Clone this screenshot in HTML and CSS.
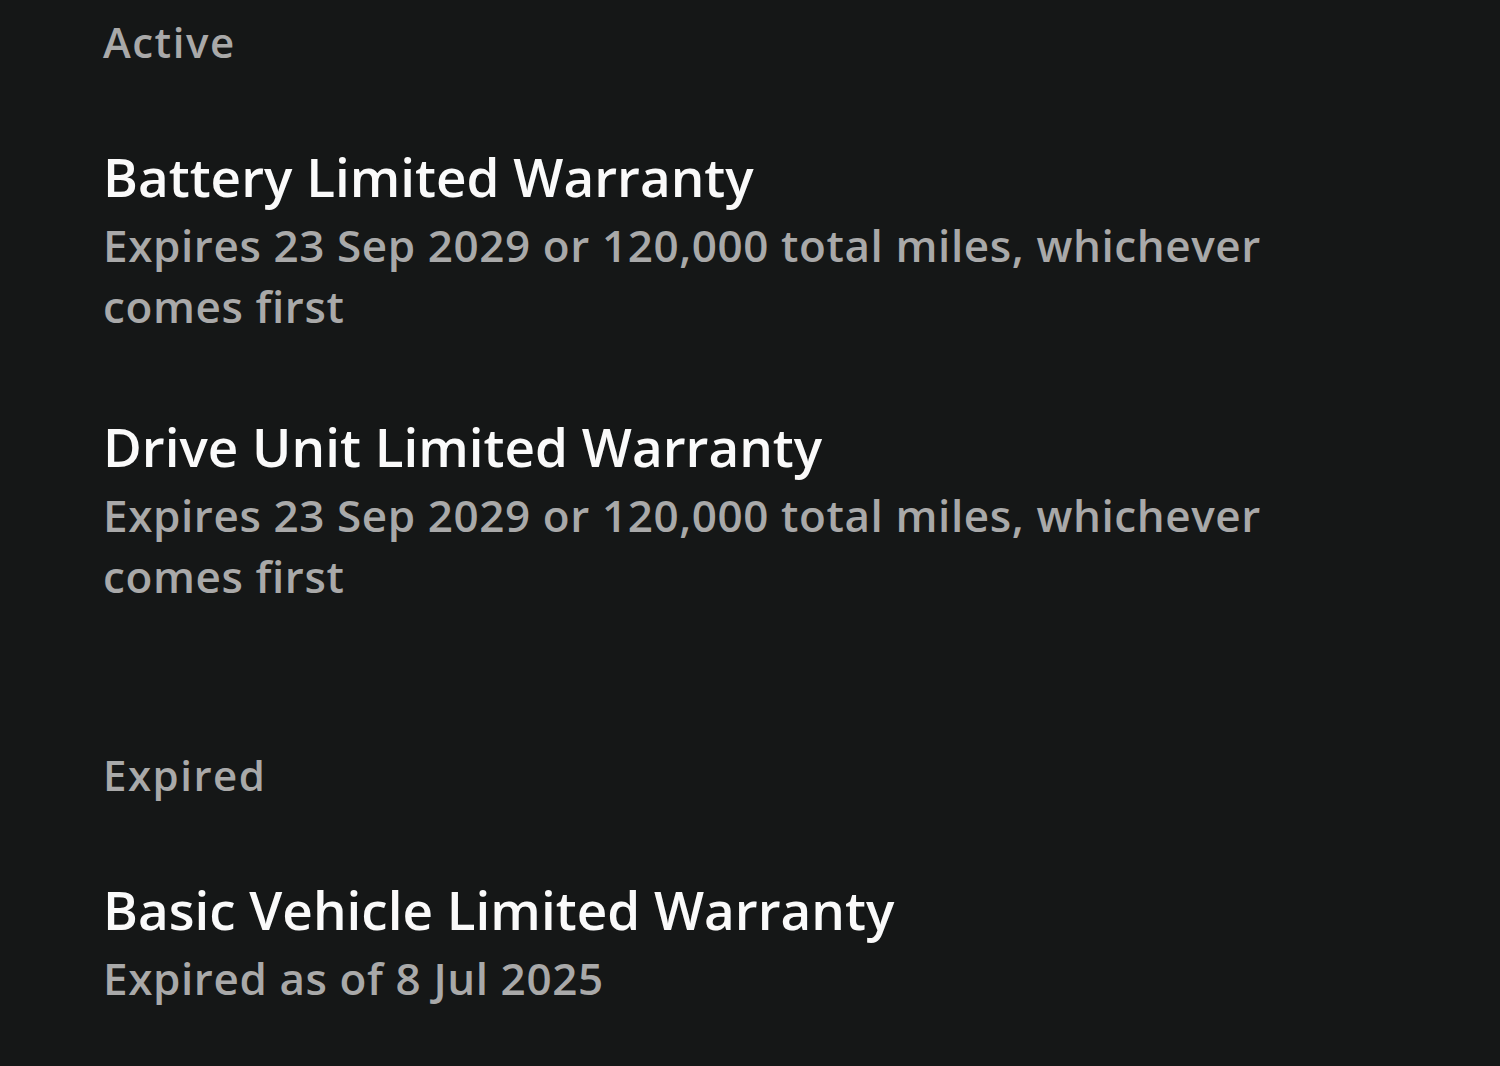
FILE: index.html
```html
<!DOCTYPE html>
<html lang="en">
<head>
    <meta charset="UTF-8">
    <title>Warranty</title>
    <link rel="stylesheet" href="styles.css">
</head>
<body>
    <main class="warranty-page">
        <section class="warranty-group">
            <h2 class="group-label">Active</h2>
            <div class="warranty-item">
                <h3>Battery Limited Warranty</h3>
                <p>Expires 23 Sep 2029 or 120,000 total miles, whichever comes first</p>
            </div>
            <div class="warranty-item">
                <h3>Drive Unit Limited Warranty</h3>
                <p>Expires 23 Sep 2029 or 120,000 total miles, whichever comes first</p>
            </div>
        </section>

        <section class="warranty-group">
            <h2 class="group-label">Expired</h2>
            <div class="warranty-item">
                <h3>Basic Vehicle Limited Warranty</h3>
                <p>Expired as of 8 Jul 2025</p>
            </div>
        </section>
    </main>
</body>
</html>
```

FILE: styles.css
```css
:root {
    --background-color: #151717;
    --title-color: #fafafa;
    --muted-color: #a9a9a9;
}

body {
    margin: 0;
    background-color: var(--background-color);
    font-family: "Open Sans", Roboto, sans-serif;
}

.warranty-page {
    padding: 12px 0 0 103px;
    width: 1180px;
}

.warranty-group {
    margin-bottom: 138px;
}

.warranty-group:last-child,
.warranty-item:last-child {
    margin-bottom: 0;
}

.group-label {
    margin: 0 0 72px;
    font-size: 42px;
    font-weight: 600;
    letter-spacing: 1.5px;
    line-height: 60px;
    color: var(--muted-color);
}

.warranty-item {
    margin-bottom: 77px;
}

.warranty-item h3 {
    margin: 0 0 5px;
    font-size: 53px;
    font-weight: 600;
    line-height: 66px;
    color: var(--title-color);
}

.warranty-item p {
    margin: 0;
    font-size: 44px;
    font-weight: 600;
    letter-spacing: 0.6px;
    line-height: 61px;
    color: var(--muted-color);
}
```
